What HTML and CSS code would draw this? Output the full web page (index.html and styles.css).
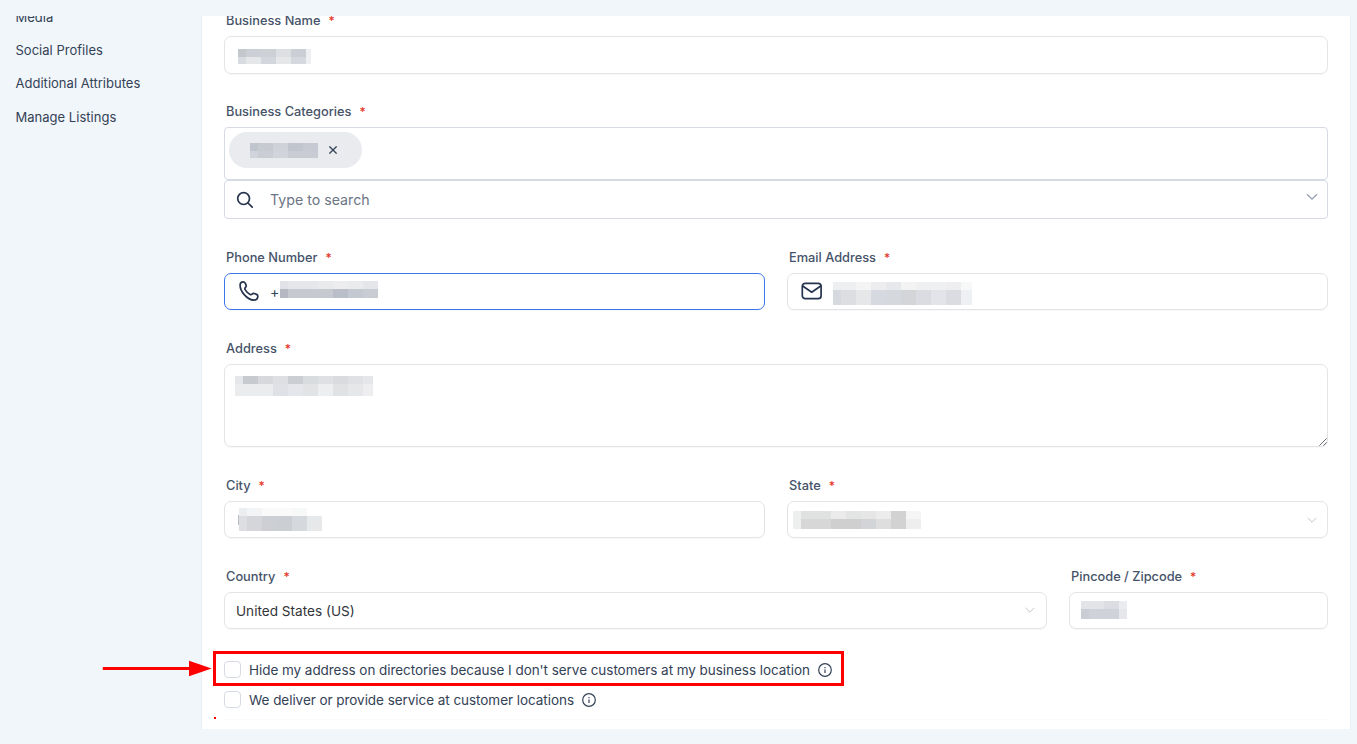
FILE: index.html
```
<!DOCTYPE html>
<html lang="en">
<head>
    <meta charset="utf-8">
    <title>Business Information</title>
    <link rel="stylesheet" href="styles.css">
</head>
<body>
    <div class="page">
        <nav class="sidebar">
            <a>Media</a>
            <a>Social Profiles</a>
            <a>Additional Attributes</a>
            <a>Manage Listings</a>
        </nav>

        <main class="panel">
            <div class="form">
                <div class="field">
                    <label><span>Business Name</span><i>*</i></label>
                    <div class="input name">
                        <svg width="73" height="15" shape-rendering="crispEdges">
                            <path fill="#c4c8cd" d="M0 0h8v8H0z"/><path fill="#cccfd5" d="M8 0h15v8H8z"/><path fill="#cdd0d5" d="M23 0h15v8H23z"/><path fill="#dedfe3" d="M38 0h15v8H38z"/><path fill="#cbced4" d="M53 0h15v8H53z"/>
                            <path fill="#d8dbe0" d="M0 8h8v7H0z"/><path fill="#e6e7e9" d="M8 8h15v7H8z"/><path fill="#d3d6dc" d="M23 8h15v7H23z"/><path fill="#e6e7e9" d="M38 8h15v7H38z"/><path fill="#d5d8dd" d="M53 8h15v7H53z"/><path fill="#eeeff1" d="M68 0h5v15h-5z"/>
                        </svg>
                    </div>
                </div>

                <div class="field">
                    <label><span>Business Categories</span><i>*</i></label>
                    <div class="tags">
                        <div class="chip">
                            <svg width="68" height="15" shape-rendering="crispEdges">
                                <path fill="#c0c4cc" d="M0 0h8v8H0z"/><path fill="#c7cad1" d="M8 0h15v8H8z"/><path fill="#cfd2d9" d="M23 0h15v8H23z"/><path fill="#c1c5cd" d="M38 0h15v8H38z"/><path fill="#c7cad2" d="M53 0h15v8H53z"/>
                                <path fill="#d1d4da" d="M0 8h8v7H0z"/><path fill="#cacdd3" d="M8 8h15v7H8z"/><path fill="#d1d4db" d="M23 8h15v7H23z"/><path fill="#caccd3" d="M38 8h30v7H38z"/>
                            </svg>
                            <svg class="close" width="8" height="8" viewBox="0 0 8 8"><path d="M.4.4l7.200 7.200M7.600.4L.4 7.600"/></svg>
                        </div>
                    </div>
                    <div class="search">
                        <svg class="icon" width="18" height="18" viewBox="0 0 18 18"><circle cx="7.600" cy="7.600" r="5.900"/><path d="M12 12l4.200 4.200"/></svg>
                        <span>Type to search</span>
                        <svg class="arrow" width="12" height="8" viewBox="0 0 12 8"><path d="M1 1.200l5 5 5-5"/></svg>
                    </div>
                </div>

                <div class="row">
                    <div class="field">
                        <label><span>Phone Number</span><i>*</i></label>
                        <div class="input phone">
                            <svg class="icon" width="20" height="20" viewBox="0 0 20 20"><path d="M1.200 3.100C1.600 1.600 2.900.9 4.100.9c1.200 0 1.800.6 2.200 1.400l.8 1.900c.4 1-.1 1.700-.8 2.400-.6.7-.6 1.300-.2 2 1.200 2 3 3.800 5 4.900.8.4 1.300.3 1.900-.3.8-.9 1.500-1.200 2.500-.7l2 .9c1.100.5 1.500 1.300 1.300 2.400-.3 1.900-1.900 3.300-4 3.300C8.300 19.100.3 9.900 1.200 3.100z"/></svg>
                            <b>+</b>
                            <svg width="98" height="17" shape-rendering="crispEdges">
                                <path fill="#e1e2e7" d="M0 0h8v8H0z"/><path fill="#e6e7ea" d="M8 0h30v8H8z"/><path fill="#e9eaec" d="M38 0h15v8H38z"/><path fill="#ededf0" d="M53 0h15v8H53z"/><path fill="#eaebed" d="M68 0h15v8H68z"/><path fill="#e5e6e9" d="M83 0h15v8H83z"/>
                                <path fill="#b5b8c3" d="M0 8h8v9H0z"/><path fill="#c6c9cf" d="M8 8h45v9H8z"/><path fill="#babec8" d="M53 8h15v9H53z"/><path fill="#c4c8d1" d="M68 8h15v9H68z"/><path fill="#c9ccd2" d="M83 8h15v9H83z"/>
                            </svg>
                        </div>
                    </div>
                    <div class="field">
                        <label><span>Email Address</span><i>*</i></label>
                        <div class="input email">
                            <svg class="icon" width="22" height="18" viewBox="0 0 22 18"><rect x="1.300" y="1.300" width="18.800" height="15.400" rx="3"/><path d="M1.700 4l9 6.200L19.700 4"/></svg>
                            <svg width="139" height="23" shape-rendering="crispEdges">
                                <path fill="#eeeff1" d="M0 0h23v8H0z"/><path fill="#f4f4f5" d="M23 0h15v8H23z"/><path fill="#ededf0" d="M38 0h15v8H38z"/><path fill="#e7e8eb" d="M53 0h15v8H53z"/><path fill="#f3f3f4" d="M68 0h15v8H68z"/><path fill="#eff0f2" d="M83 0h30v8H83z"/><path fill="#eeeef0" d="M113 0h15v8h-15z"/><path fill="#f7f9f9" d="M128 0h11v8h-11z"/>
                                <path fill="#d6dade" d="M0 8h8v15H0z"/><path fill="#dddee2" d="M8 8h15v15H8z"/><path fill="#e5e7e9" d="M23 8h15v15H23z"/><path fill="#d6d9df" d="M38 8h15v15H38z"/><path fill="#d5d9de" d="M53 8h15v15H53z"/><path fill="#d4d5d8" d="M68 8h15v15H68z"/><path fill="#dbdce1" d="M83 8h15v15H83z"/><path fill="#e3e4e9" d="M98 8h15v15H98z"/><path fill="#dbdce1" d="M113 8h15v15h-15z"/><path fill="#eff0f3" d="M128 8h11v15h-11z"/>
                            </svg>
                        </div>
                    </div>
                </div>

                <div class="field">
                    <label><span>Address</span><i>*</i></label>
                    <div class="input address">
                        <svg width="138" height="20" shape-rendering="crispEdges">
                            <path fill="#e5e7ea" d="M0 0h8v8H0z"/><path fill="#c7cace" d="M8 0h15v8H8z"/><path fill="#d7d8dc" d="M23 0h15v8H23z"/><path fill="#dedfe3" d="M38 0h15v8H38z"/><path fill="#cbced3" d="M53 0h15v8H53z"/><path fill="#d8dcdf" d="M68 0h15v8H68z"/><path fill="#dfe0e4" d="M83 0h15v8H83z"/><path fill="#dadbdf" d="M98 0h15v8H98z"/><path fill="#dfe1e5" d="M113 0h15v8h-15z"/><path fill="#e5e6e9" d="M128 0h10v8h-10z"/>
                            <path fill="#ebecee" d="M0 8h38v12H0z"/><path fill="#e0e1e6" d="M38 8h15v12H38z"/><path fill="#e4e6eb" d="M53 8h15v12H53z"/><path fill="#e2e3e5" d="M68 8h15v12H68z"/><path fill="#edeef0" d="M83 8h15v12H83z"/><path fill="#e1e2e4" d="M98 8h15v12H98z"/><path fill="#e6e7e9" d="M113 8h15v12h-15z"/><path fill="#eeeef1" d="M128 8h10v12h-10z"/>
                        </svg>
                        <svg class="grip" width="9" height="9" viewBox="0 0 9 9"><path d="M1.300 8.700L8.700 1.300M5.300 8.700l3.400-3.400"/></svg>
                    </div>
                </div>

                <div class="row">
                    <div class="field">
                        <label><span>City</span><i>*</i></label>
                        <div class="input city">
                            <svg width="84" height="23" shape-rendering="crispEdges">
                                <path fill="#b9bdc6" d="M0 7h1v10H0z"/>
                                <path fill="#ecedef" d="M1 0h8v8H1z"/><path fill="#f3f4f6" d="M9 0h15v8H9z"/><path fill="#fafafb" d="M24 0h30v8H24z"/><path fill="#f7f9f9" d="M54 0h15v8H54z"/>
                                <path fill="#dddee2" d="M1 8h8v15H1z"/><path fill="#d5d6da" d="M9 8h15v15H9z"/><path fill="#cecfd4" d="M24 8h15v15H24z"/><path fill="#cbced3" d="M39 8h15v15H39z"/><path fill="#d5d9de" d="M54 8h15v15H54z"/><path fill="#e6e8e9" d="M69 8h15v15H69z"/>
                            </svg>
                        </div>
                    </div>
                    <div class="field">
                        <label><span>State</span><i>*</i></label>
                        <div class="input state">
                            <svg width="128" height="18" shape-rendering="crispEdges">
                                <path fill="#edeeee" d="M0 0h8v18H0z"/><path fill="#e0e1e1" d="M8 0h30v8H8z"/><path fill="#ebebeb" d="M38 0h15v8H38z"/><path fill="#e2e5e4" d="M53 0h15v8H53z"/><path fill="#e6e6e7" d="M68 0h15v8H68z"/><path fill="#ececed" d="M83 0h15v8H83z"/><path fill="#f5f5f5" d="M113 0h15v8h-15z"/>
                                <path fill="#d7d7d7" d="M8 8h30v10H8z"/><path fill="#cfcfd0" d="M38 8h30v10H38z"/><path fill="#d2d4d8" d="M68 8h15v10H68z"/><path fill="#dededf" d="M83 8h15v10H83z"/><path fill="#d2d2d2" d="M98 0h15v18H98z"/><path fill="#eeeeee" d="M113 8h15v10h-15z"/>
                            </svg>
                            <svg class="arrow" width="10" height="7" viewBox="0 0 10 7"><path d="M.6.8L5 5.200 9.400.8"/></svg>
                        </div>
                    </div>
                </div>

                <div class="row country-row">
                    <div class="field">
                        <label><span>Country</span><i>*</i></label>
                        <div class="input country">
                            <span>United States (US)</span>
                            <svg class="arrow" width="10" height="7" viewBox="0 0 10 7"><path d="M.6.8L5 5.200 9.400.8"/></svg>
                        </div>
                    </div>
                    <div class="field">
                        <label><span>Pincode / Zipcode</span><i>*</i></label>
                        <div class="input zip">
                            <svg width="46" height="18" shape-rendering="crispEdges">
                                <path fill="#e3e4e7" d="M0 0h23v8H0z"/><path fill="#dcdde2" d="M23 0h15v8H23z"/><path fill="#ebecef" d="M38 0h8v8h-8z"/>
                                <path fill="#cbcdd4" d="M0 8h8v10H0z"/><path fill="#d0d2d9" d="M8 8h30v10H8z"/><path fill="#e6e7eb" d="M38 8h8v10h-8z"/>
                            </svg>
                        </div>
                    </div>
                </div>

                <div class="options">
                    <div class="option">
                        <span class="box"></span>
                        <span class="text">Hide my address on directories because I don't serve customers at my business location</span>
                        <svg class="info" width="14" height="14" viewBox="0 0 14 14"><circle cx="7" cy="7" r="6.300"/><path d="M7 6.500v3.600M7 3.900v1.300"/></svg>
                    </div>
                    <div class="option">
                        <span class="box"></span>
                        <span class="text">We deliver or provide service at customer locations</span>
                        <svg class="info" width="14" height="14" viewBox="0 0 14 14"><circle cx="7" cy="7" r="6.300"/><path d="M7 6.500v3.600M7 3.900v1.300"/></svg>
                    </div>
                </div>
            </div>
        </main>
    </div>

    <!-- callout drawn over the form -->
    <svg class="pointer" width="110" height="17" viewBox="0 0 110 17"><path d="M.8 7H87V.8l22.700 7.700L87 16.200V10H.8z"/></svg>
    <div class="highlight"></div>
    <div class="dot"></div>
</body>
</html>
```

FILE: styles.css
```
* {
    box-sizing: border-box;
}

body {
    margin: 0;
    padding-top: 16px;
    height: 744px;
    overflow: hidden;
    position: relative;
    background-color: #f1f6fa;
    font-family: Inter, sans-serif;
    color: #344256;
}

svg {
    display: block;
    flex: none;
    fill: none;
}

.page {
    display: flex;
    height: 713px;
    overflow: hidden;
}

.sidebar {
    width: 202px;
    padding-left: 15.5px;
    margin-top: -16.5px;
    border-right: 1px solid #e9eef3;
}

.sidebar a {
    display: block;
    height: 33.4px;
    line-height: 34px;
    font-size: 13px;
    letter-spacing: 0.02px;
}

.panel {
    width: 1149px;
    padding: 0 22px;
    background-color: #fff;
    border-right: 1px solid #ebf0f5;
}

.form {
    display: flex;
    flex-direction: column;
    gap: 29px;
    width: 1104px;
    height: 709px;
    margin-top: -5px;
    border-bottom: 1px solid #fafbfb;
}

.row {
    display: grid;
    grid-template-columns: 1fr 1fr;
    gap: 22px;
}

.country-row {
    grid-template-columns: 1fr 259px;
}

label {
    display: flex;
    gap: 8px;
    height: 18px;
    margin-bottom: 7px;
    padding-left: 2px;
    font-size: 12.8px;
    font-weight: 500;
    line-height: 20px;
    color: #465369;
}

label i {
    font-style: normal;
    font-size: 12px;
    color: #e53427;
}

.input {
    display: flex;
    align-items: flex-start;
    height: 37px;
    border: 1px solid #e3e4e7;
    border-radius: 7px;
    background-color: #fff;
    box-shadow: 0 1px 1px rgba(0, 0, 0, 0.03);
}

.name {
    height: 38px;
    margin-bottom: -1px;
    padding: 12px 13px;
}

.tags {
    height: 53px;
    padding: 4px;
    border: 1px solid #d5dae3;
    border-radius: 4px;
}

.chip {
    display: flex;
    align-items: center;
    width: 133px;
    height: 36px;
    padding-left: 21px;
    gap: 11px;
    border-radius: 18px;
    background-color: #e9ebef;
}

.close {
    stroke: #344256;
    stroke-width: 1.3;
}

.search {
    display: flex;
    align-items: center;
    height: 39px;
    padding: 0 9px 0 11px;
    border: 1px solid #d5dae3;
    border-radius: 4px;
    font-size: 14.2px;
    color: #6c7585;
}

.search span {
    margin-left: 16px;
}

.search .arrow {
    stroke: #94a0b3;
    stroke-width: 1.3;
    margin-bottom: 5px;
}

.icon {
    stroke: #26344d;
    stroke-width: 1.7;
    stroke-linecap: round;
    stroke-linejoin: round;
}

.arrow {
    margin-left: auto;
    stroke: #c3c6ca;
}

.phone {
    padding: 7px 14px;
    border-color: #3b76ea;
}

.phone b {
    width: 9px;
    margin: 2px 0 0 12px;
    font-size: 14px;
    font-weight: 400;
    line-height: 18px;
    text-indent: -1px;
}

.email {
    padding: 8px 13px;
    gap: 10px;
}

.address {
    position: relative;
    height: 83px;
    padding: 11px 10px;
}

.grip {
    position: absolute;
    right: 0;
    bottom: 0;
    stroke: #6d7075;
}

.city {
    padding: 6px 13px;
}

.state {
    padding: 9px 10px 0 5px;
}

.state .arrow {
    margin-top: 6px;
}

.country {
    align-items: center;
    padding: 0 11px;
    font-size: 13.6px;
    color: #333539;
}

.zip {
    padding: 8px 11px;
}

.options {
    margin-top: -3.5px;
}

.option {
    display: flex;
    align-items: center;
    height: 30px;
    font-size: 13.5px;
    letter-spacing: -0.05px;
}

.box {
    width: 17px;
    height: 17px;
    margin-right: 8px;
    border: 1px solid #d6dbe3;
    border-radius: 4px;
}

.text {
    white-space: nowrap;
}

.info {
    margin-left: 8px;
    stroke: #344256;
    stroke-width: 1.2;
}

.pointer {
    position: absolute;
    left: 102px;
    top: 660px;
    fill: #fe0000;
}

.highlight {
    position: absolute;
    left: 213px;
    top: 651px;
    width: 631px;
    height: 35px;
    border: 3px solid #fe0000;
}

.dot {
    position: absolute;
    left: 214px;
    top: 717px;
    width: 2px;
    height: 2px;
    background-color: #fe0000;
}
```
